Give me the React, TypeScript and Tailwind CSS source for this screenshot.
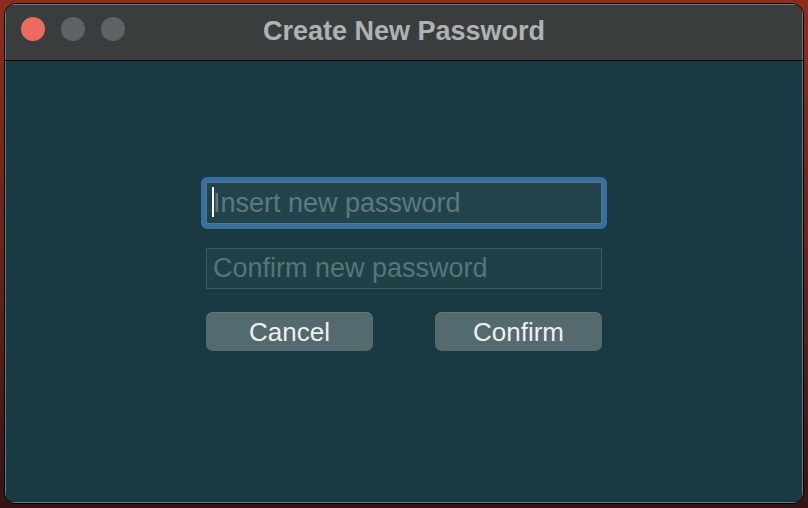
import React from 'react';

const font = { fontFamily: '"Liberation Sans", Arial, sans-serif' };

function TrafficLights() {
  return (
    <div className="absolute left-[16px] top-[13px] flex gap-[16px]">
      <span className="block w-[24px] h-[24px] rounded-full bg-[#ed6a5e]" />
      <span className="block w-[24px] h-[24px] rounded-full bg-[#5e6264]" />
      <span className="block w-[24px] h-[24px] rounded-full bg-[#5e6264]" />
    </div>
  );
}

export default function App() {
  return (
    <div
      className="w-[808px] h-[508px] pt-[3px] pl-[4px] pr-[4px] pb-[4px] bg-gradient-to-b from-[#8e2c1e] via-[#6a2219] to-[#351315]"
      style={font}
    >
      <div className="flex flex-col w-full h-full rounded-[12px] border border-black overflow-hidden shadow-[inset_0_0_0_1px_#6f7677]">
        {/* Title bar */}
        <div className="relative h-[57px] shrink-0 bg-[#3a3d3e] border-b border-black flex items-center justify-center shadow-[inset_1px_1px_0_0_#70777a,inset_-1px_0_0_0_#70777a]">
          <TrafficLights />
          <span className="text-[27px] font-bold text-[#aeb2b4] leading-none -mt-[1px]">Create New Password</span>
        </div>

        {/* Content */}
        <div className="flex-1 bg-[#193a43] flex flex-col items-center pt-[116px] shadow-[inset_1px_-1px_0_0_#5e7f85,inset_-1px_0_0_0_#5e7f85]">
          <div className="w-[396px] flex flex-col">
            <div className="-mx-[5px] rounded-[6px] border-[5px] border-[#3a6f9b]">
              <div className="relative h-[42px] bg-[#22434b] border border-[#4f7a96] flex items-center pl-[6px]">
                <span className="absolute left-[5px] top-[4px] w-[2px] h-[30px] bg-white" />
                <span className="text-[27px] text-[#5b7a80] leading-none">Insert new password</span>
              </div>
            </div>

            <div className="mt-[19px] h-[41px] bg-[#213f47] border border-[#3b5a60] flex items-center pl-[6px]">
              <span className="text-[27px] text-[#587479] leading-none">Confirm new password</span>
            </div>

            <div className="mt-[23px] flex justify-between">
              <button className="w-[167px] h-[39px] rounded-[7px] bg-[#546a6f] text-[26px] text-[#eef0f0] leading-none shadow-[inset_0_1px_0_0_#60777c]">
                Cancel
              </button>
              <button className="w-[167px] h-[39px] rounded-[7px] bg-[#546a6f] text-[26px] text-[#eef0f0] leading-none shadow-[inset_0_1px_0_0_#60777c]">
                Confirm
              </button>
            </div>
          </div>
        </div>
      </div>
    </div>
  );
}
